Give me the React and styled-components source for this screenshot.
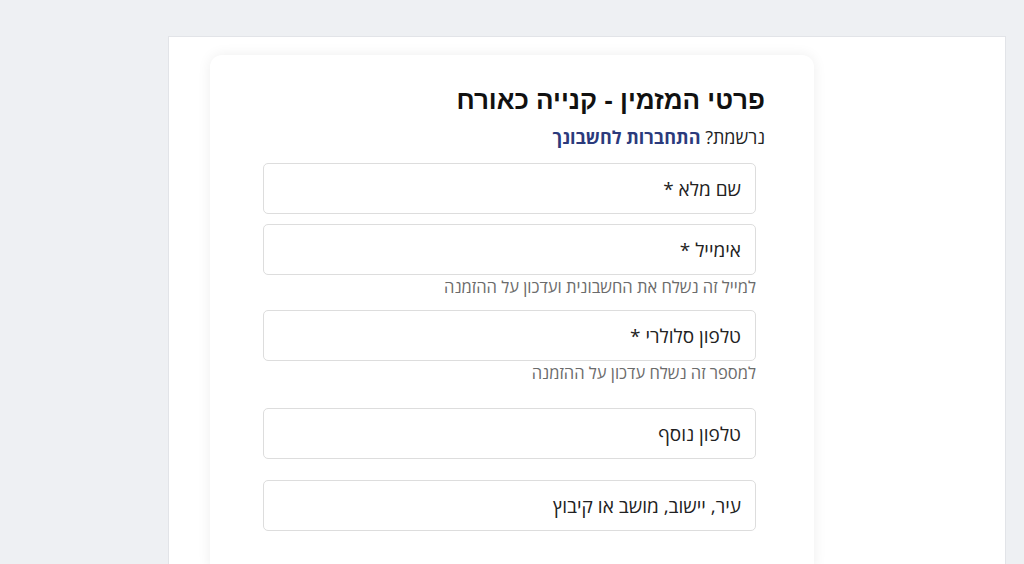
import styled, { createGlobalStyle } from 'styled-components';

const GlobalStyle = createGlobalStyle`
  html, body {
    margin: 0;
    padding: 0;
    background: #eef0f3;
    height: 100%;
    overflow: hidden;
  }
  * { box-sizing: border-box; }
`;

const fields = [
  { label: 'שם מלא *', gap: 10 },
  { label: 'אימייל *', hint: 'למייל זה נשלח את החשבונית ועדכון על ההזמנה', gap: 13 },
  { label: 'טלפון סלולרי *', hint: 'למספר זה נשלח עדכון על ההזמנה', gap: 25 },
  { label: 'טלפון נוסף', gap: 21 },
  { label: 'עיר, יישוב, מושב או קיבוץ', gap: 0 },
];

const App = () => {
  return (
    <>
      <GlobalStyle />
      <Page>
        <Panel>
          <Card dir="rtl">
            <Title>פרטי המזמין - קנייה כאורח</Title>
            <LoginLine>
              נרשמת? <LoginLink href="#">התחברות לחשבונך</LoginLink>
            </LoginLine>
            <Form>
              {fields.map((f) => (
                <Field key={f.label} $gap={f.gap}>
                  <Input placeholder={f.label} />
                  {f.hint && <Hint>{f.hint}</Hint>}
                </Field>
              ))}
            </Form>
          </Card>
        </Panel>
      </Page>
    </>
  );
};

export default App;

const Page = styled.div`
  padding: 36px 18px 0 168px;
  height: 100vh;
  overflow: hidden;
`;

const Panel = styled.main`
  background: #ffffff;
  border: 1px solid #e2e4e8;
  border-bottom: none;
  height: 100%;
  overflow: hidden;
  padding: 18px 0 0 41px;
`;

const Card = styled.section`
  width: 604px;
  min-height: 520px;
  background: #ffffff;
  border-radius: 12px;
  box-shadow: 0 0 14px rgba(0, 0, 0, 0.07);
  padding: 28px 49px 40px 53px;
  font-family: "Liberation Sans", Arial, sans-serif;
  color: #111;
`;

const Title = styled.h2`
  margin: 0;
  font-size: 26px;
  font-weight: 700;
  line-height: 34px;
`;

const LoginLine = styled.p`
  margin: 7px 0 13px;
  font-family: "Open Sans", sans-serif;
  font-size: 18px;
  line-height: 26px;
  color: #222;
`;

const LoginLink = styled.a`
  color: #2b3a7c;
  font-weight: 700;
  text-decoration: none;
`;

const Form = styled.form`
  display: flex;
  flex-direction: column;
  padding-right: 9px;
`;

const Field = styled.div`
  display: flex;
  flex-direction: column;
  margin-bottom: ${(p) => p.$gap}px;
`;

const Input = styled.input`
  width: 100%;
  height: 51px;
  border: 1px solid #dddddd;
  border-radius: 5px;
  padding: 0 14px;
  font-family: "Open Sans", sans-serif;
  font-size: 19px;
  color: #222;
  background: #fff;
  outline: none;

  &::placeholder {
    color: #222;
    opacity: 1;
  }
`;

const Hint = styled.span`
  margin-top: 2px;
  font-family: "Open Sans", sans-serif;
  font-size: 16.5px;
  line-height: 20px;
  color: #6b6b6b;
`;
